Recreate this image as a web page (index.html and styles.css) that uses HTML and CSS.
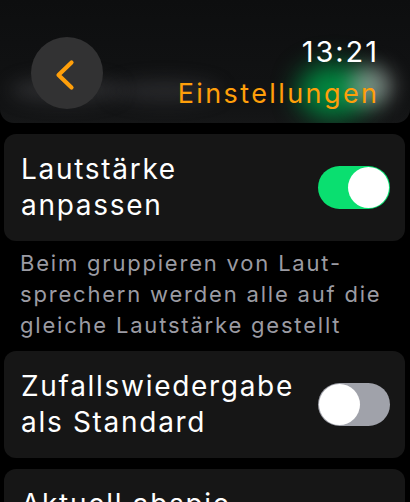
FILE: index.html
```html
<!DOCTYPE html>
<html lang="de">
<head>
<meta charset="utf-8">
<title>Einstellungen</title>
<link rel="stylesheet" href="styles.css">
</head>
<body>
<header class="nav">
  <div class="blur blur-a"></div>
  <div class="blur blur-b"></div>
  <div class="blur blur-green"></div>
  <div class="blur blur-white"></div>
  <button class="back" aria-label="Zurück">
    <svg width="72" height="72" viewBox="0 0 72 72"><path d="M40.5 25.5 L27.5 38 L40.5 50.5" fill="none" stroke="#ff9f0a" stroke-width="4.2" stroke-linecap="round" stroke-linejoin="round"/></svg>
  </button>
  <div class="titles">
    <div class="time">13:21</div>
    <div class="title">Einstellungen</div>
  </div>
</header>
<main class="list">
  <div class="card">
    <div class="label">Lautstärke<br>anpassen</div>
    <div class="toggle on"><span class="knob"></span></div>
  </div>
  <p class="note">Beim gruppieren von Laut-<br>sprechern werden alle auf die<br>gleiche Lautstärke gestellt</p>
  <div class="card card-second">
    <div class="label">Zufallswiedergabe<br>als Standard</div>
    <div class="toggle off"><span class="knob"></span></div>
  </div>
  <div class="card card-third">
    <div class="label">Aktuell abspie-<br>lende Titel</div>
  </div>
</main>
</body>
</html>
```
FILE: styles.css
```css
* { box-sizing: border-box; }
html, body {
  margin: 0;
  padding: 0;
  background: #000;
  height: 502px;
  overflow: hidden;
}
body {
  font-family: Inter, "Noto Sans", sans-serif;
  color: #fff;
}
.nav {
  position: relative;
  height: 123px;
  background: linear-gradient(#0d0e0f, #121314 85%, #151617);
  border-radius: 0 0 14px 14px;
  display: flex;
  justify-content: space-between;
  padding: 37px 33px 0 31px;
  overflow: hidden;
}
.blur {
  position: absolute;
  border-radius: 50%;
  filter: blur(9px);
}
.blur-a {
  left: 10px; top: 78px; width: 110px; height: 24px;
  background: rgba(85, 85, 90, 0.4);
}
.blur-b {
  left: 110px; top: 80px; width: 110px; height: 22px;
  background: rgba(80, 80, 85, 0.35);
}
.blur-green {
  left: 298px; top: 64px; width: 72px; height: 54px;
  background: rgba(0, 150, 70, 0.9);
  filter: blur(13px);
}
.blur-white {
  left: 350px; top: 66px; width: 42px; height: 40px;
  background: rgba(200, 210, 205, 0.55);
  filter: blur(10px);
}
.back {
  position: relative;
  width: 72px;
  height: 72px;
  border-radius: 50%;
  border: 0;
  padding: 0;
  background: #323233;
  display: flex;
  align-items: center;
  justify-content: center;
}
.back svg { display: block; }
.titles {
  position: relative;
  display: flex;
  flex-direction: column;
  align-items: flex-end;
}
.time {
  font-size: 29px;
  line-height: 29px;
  letter-spacing: 1.9px;
  margin-right: -1.9px;
}
.title {
  font-size: 27px;
  line-height: 27px;
  margin-top: 14px;
  color: #ff9f0a;
  letter-spacing: 2.4px;
  margin-right: -2.4px;
}
.list {
  display: flex;
  flex-direction: column;
  padding: 11px 5px 0 4px;
}
.card {
  background: #161616;
  border-radius: 12px;
  padding: 17px 15px 18px 17px;
  display: flex;
  align-items: center;
  justify-content: space-between;
}
.label {
  font-size: 28px;
  line-height: 36px;
  letter-spacing: 1.7px;
}
.card-third { margin-top: 11px; }
.note {
  margin: 7px 0 10px 0;
  padding-left: 16px;
  font-size: 22px;
  line-height: 31px;
  color: #9b9ba3;
  letter-spacing: 1.8px;
  white-space: nowrap;
}
.toggle {
  width: 72px;
  height: 43px;
  border-radius: 22px;
  display: flex;
  align-items: center;
  padding: 1px;
  flex-shrink: 0;
}
.toggle.on { background: #0adf70; justify-content: flex-end; }
.toggle.off { background: #a0a2aa; justify-content: flex-start; }
.knob {
  width: 41px;
  height: 41px;
  border-radius: 50%;
  background: #fff;
}
```
